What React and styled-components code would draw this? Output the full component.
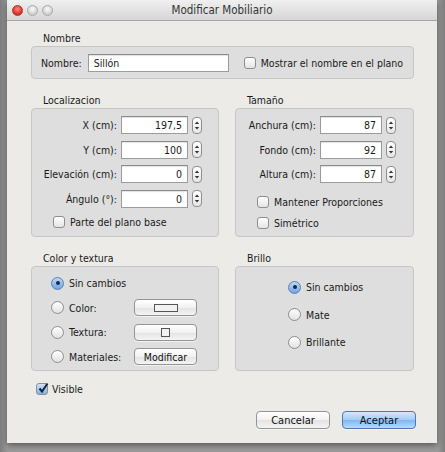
import { createGlobalStyle, styled, css } from "styled-components"

const Global = createGlobalStyle`
    html, body {
        margin: 0;
        padding: 0;
        background: #8f8f8f;
    }
    #root {
        width: 445px;
        height: 452px;
        overflow: hidden;
        background: linear-gradient(90deg, #7d7d7d 0px, #9a9a9a 7px, #9a9a9a 438px, #7d7d7d 445px);
    }
`

const Window = styled.div`
    margin-left: 7px;
    width: 430px;
    height: 443px;
    background: #ecebe8;
    font-family: "DejaVu Sans Condensed", "DejaVu Sans", sans-serif;
    font-stretch: condensed;
    font-size: 10.5px;
    color: #1a1a1a;
    display: flex;
    flex-direction: column;
    box-shadow: 0 2px 6px rgba(0, 0, 0, 0.45);
`

const TitleBar = styled.div`
    height: 20px;
    flex: none;
    display: flex;
    align-items: center;
    position: relative;
    background: linear-gradient(#f0f0f0, #d6d6d6);
    border-bottom: 1px solid #a7a7a7;
    border-radius: 4px 4px 0 0;
`

const Lights = styled.div`
    display: flex;
    gap: 4px;
    padding-left: 5px;
`

const Light = styled.span`
    box-sizing: border-box;
    width: 11px;
    height: 11px;
    border-radius: 50%;
    border: 1px solid ${(p) => (p.$red ? "#a33" : "#a8a8a8")};
    background: ${(p) =>
        p.$red
            ? "radial-gradient(circle at 50% 35%, #ff8a80, #e0362b 60%, #a51d14)"
            : "radial-gradient(circle at 50% 35%, #fafafa, #d6d6d6 60%, #bdbdbd)"};
`

const Title = styled.div`
    position: absolute;
    left: 0;
    right: 0;
    text-align: center;
    font-size: 11.5px;
    color: #333;
    pointer-events: none;
`

const Content = styled.div`
    flex: 1;
    padding: 9px 23px 0 24px;
    display: flex;
    flex-direction: column;
`

const Columns = styled.div`
    display: grid;
    grid-template-columns: 188px 179px;
    column-gap: 16px;
    margin-top: 13px;
`

const Section = styled.div`
    display: flex;
    flex-direction: column;
`

const SectionTitle = styled.div`
    padding-left: 12px;
    height: 16px;
    line-height: 16px;
`

const Panel = styled.div`
    background: #dedede;
    border: 1px solid #c6c6c6;
    border-radius: 4px;
    box-sizing: border-box;
    height: ${(p) => p.$h}px;
`

const NameRow = styled.div`
    display: flex;
    align-items: center;
    height: 100%;
    padding-left: 9px;
`

const Label = styled.span`
    white-space: nowrap;
    text-align: ${(p) => p.$align || "left"};
`

const Input = styled.div`
    box-sizing: border-box;
    width: ${(p) => p.$w}px;
    height: 18px;
    line-height: 16px;
    background: #fff;
    border: 1px solid #9c9c9c;
    border-top-color: #8a8a8a;
    box-shadow: inset 0 1px 1px rgba(0, 0, 0, 0.12);
    padding: 0 5px;
    text-align: ${(p) => p.$align || "left"};
`

const Check = styled.span`
    box-sizing: border-box;
    width: 12px;
    height: 12px;
    flex: none;
    border: 1px solid #8e8e8e;
    border-radius: 3px;
    background: ${(p) =>
        p.$on ? "linear-gradient(#cfe3fa, #7fb1e8)" : "linear-gradient(#ffffff, #e4e4e4)"};
    position: relative;
    display: inline-flex;
    align-items: center;
    justify-content: center;
`

const Radio = styled.span`
    box-sizing: border-box;
    width: 13px;
    height: 13px;
    flex: none;
    border-radius: 50%;
    border: 1px solid ${(p) => (p.$on ? "#5a7fb0" : "#8e8e8e")};
    background: ${(p) =>
        p.$on ? "linear-gradient(#bcd8f8, #6ea6e8)" : "linear-gradient(#ffffff, #e2e2e2)"};
    display: inline-flex;
    align-items: center;
    justify-content: center;
    &::after {
        content: "";
        width: 4px;
        height: 4px;
        border-radius: 50%;
        background: #1a2a3a;
        display: ${(p) => (p.$on ? "block" : "none")};
    }
`

const Option = styled.div`
    display: flex;
    align-items: center;
    gap: 5px;
    height: 13px;
    ${(p) =>
        p.$ml &&
        css`
            margin-left: ${p.$ml}px;
        `}
`

const Form = styled.div`
    display: grid;
    grid-template-columns: 1fr ${(p) => p.$input}px 10px;
    column-gap: ${(p) => p.$gap}px;
    row-gap: 6.5px;
    align-items: center;
    padding: 7px ${(p) => p.$pr}px 0 0;
`

const SpinnerBox = styled.span`
    box-sizing: border-box;
    width: 10px;
    height: 17px;
    border: 1px solid #8e8e8e;
    border-radius: 4px;
    background: linear-gradient(#ffffff, #e6e6e6);
    display: flex;
    align-items: center;
    justify-content: center;
`

const Checks = styled.div`
    display: flex;
    flex-direction: column;
    gap: ${(p) => p.$gap}px;
    padding-left: ${(p) => p.$pl}px;
    margin-top: ${(p) => p.$mt}px;
`

const Radios = styled.div`
    display: grid;
    grid-template-columns: 70px 63px;
    grid-auto-rows: 17px;
    column-gap: 13px;
    row-gap: 7.5px;
    align-items: center;
    padding: 7.5px 0 0 19px;
`

const Centered = styled.div`
    display: flex;
    flex-direction: column;
    gap: 14.5px;
    padding: 13.5px 0 0 52px;
`

const PushButton = styled.button`
    box-sizing: border-box;
    width: ${(p) => p.$w}px;
    height: ${(p) => p.$h || 17}px;
    padding: 0;
    font-family: inherit;
    font-stretch: inherit;
    font-size: ${(p) => p.$fs || 10.5}px;
    color: #111;
    border-radius: 4px;
    border: 1px solid #949494;
    background: linear-gradient(#ffffff, #f1f1f1 50%, #e3e3e3 51%, #f4f4f4);
    box-shadow: 0 1px 0 rgba(255, 255, 255, 0.6);
    display: inline-flex;
    align-items: center;
    justify-content: center;
    ${(p) =>
        p.$primary &&
        css`
            border-color: #4d78b3;
            background: linear-gradient(#d4e8fd, #a2cbf5 50%, #7fb7f0 51%, #b4dcfb);
        `}
`

const Swatch = styled.span`
    box-sizing: border-box;
    width: ${(p) => p.$w}px;
    height: ${(p) => p.$h}px;
    border: 1px solid #555;
    background: #f2f2f2;
`

const Footer = styled.div`
    display: flex;
    flex-direction: column;
`

const VisibleRow = styled.div`
    display: flex;
    align-items: center;
    gap: 4px;
    height: 13px;
    padding: 11.5px 0 0 5px;
`

const Actions = styled.div`
    display: flex;
    justify-content: flex-end;
    gap: 12px;
    margin: 15.5px -2px 0 0;
`

function Spinner() {
    return (
        <SpinnerBox>
            <svg width="6" height="11" viewBox="0 0 6 11">
                <path d="M3 1.5 L5.2 4 H0.8 Z" fill="#333" />
                <path d="M3 9.5 L5.2 7 H0.8 Z" fill="#333" />
            </svg>
        </SpinnerBox>
    )
}

function NumberRow({ label, value, width }) {
    return (
        <>
            <Label $align="right">{label}</Label>
            <Input $w={width} $align="right">
                {value}
            </Input>
            <Spinner />
        </>
    )
}

export default function App() {
    return (
        <>
            <Global />
            <Window>
                <TitleBar>
                    <Lights>
                        <Light $red />
                        <Light />
                        <Light />
                    </Lights>
                    <Title>Modificar Mobiliario</Title>
                </TitleBar>
                <Content>
                    <Section>
                        <SectionTitle>Nombre</SectionTitle>
                        <Panel $h={33}>
                            <NameRow>
                                <Label>Nombre:</Label>
                                <Input $w={141} style={{ marginLeft: 6 }}>
                                    Sillón
                                </Input>
                                <Option $ml={15}>
                                    <Check />
                                    <Label>Mostrar el nombre en el plano</Label>
                                </Option>
                            </NameRow>
                        </Panel>
                    </Section>

                    <Columns>
                        <Section>
                            <SectionTitle>Localizacion</SectionTitle>
                            <Panel $h={129}>
                                <Form $input={67} $gap={4} $pr={16}>
                                    <NumberRow label="X (cm):" value="197,5" />
                                    <NumberRow label="Y (cm):" value="100" />
                                    <NumberRow label="Elevación (cm):" value="0" />
                                    <NumberRow label="Ángulo (°):" value="0" />
                                </Form>
                                <Checks $gap={0} $pl={21} $mt={8}>
                                    <Option>
                                        <Check />
                                        <Label>Parte del plano base</Label>
                                    </Option>
                                </Checks>
                            </Panel>
                        </Section>
                        <Section>
                            <SectionTitle>Tamaño</SectionTitle>
                            <Panel $h={129}>
                                <Form $input={62} $gap={4} $pr={17}>
                                    <NumberRow label="Anchura (cm):" value="87" />
                                    <NumberRow label="Fondo (cm):" value="92" />
                                    <NumberRow label="Altura (cm):" value="87" />
                                </Form>
                                <Checks $gap={8} $pl={21} $mt={12}>
                                    <Option>
                                        <Check />
                                        <Label>Mantener Proporciones</Label>
                                    </Option>
                                    <Option>
                                        <Check />
                                        <Label>Simétrico</Label>
                                    </Option>
                                </Checks>
                            </Panel>
                        </Section>
                    </Columns>

                    <Columns>
                        <Section>
                            <SectionTitle>Color y textura</SectionTitle>
                            <Panel $h={105}>
                                <Radios>
                                    <Option>
                                        <Radio $on />
                                        <Label>Sin cambios</Label>
                                    </Option>
                                    <span />
                                    <Option>
                                        <Radio />
                                        <Label>Color:</Label>
                                    </Option>
                                    <PushButton $w={63}>
                                        <Swatch $w={24} $h={8} />
                                    </PushButton>
                                    <Option>
                                        <Radio />
                                        <Label>Textura:</Label>
                                    </Option>
                                    <PushButton $w={63}>
                                        <Swatch $w={9} $h={9} />
                                    </PushButton>
                                    <Option>
                                        <Radio />
                                        <Label>Materiales:</Label>
                                    </Option>
                                    <PushButton $w={63}>Modificar</PushButton>
                                </Radios>
                            </Panel>
                        </Section>
                        <Section>
                            <SectionTitle>Brillo</SectionTitle>
                            <Panel $h={105}>
                                <Centered>
                                    <Option>
                                        <Radio $on />
                                        <Label>Sin cambios</Label>
                                    </Option>
                                    <Option>
                                        <Radio />
                                        <Label>Mate</Label>
                                    </Option>
                                    <Option>
                                        <Radio />
                                        <Label>Brillante</Label>
                                    </Option>
                                </Centered>
                            </Panel>
                        </Section>
                    </Columns>

                    <Footer>
                        <VisibleRow>
                            <Check $on>
                                <svg
                                    width="12"
                                    height="12"
                                    viewBox="0 0 12 12"
                                    style={{ position: "absolute", left: 0, top: -2 }}>
                                    <path d="M2.5 6.5 L5 9.5 L10.5 1.5" stroke="#1b2433" strokeWidth="2" fill="none" />
                                </svg>
                            </Check>
                            <Label>Visible</Label>
                        </VisibleRow>
                        <Actions>
                            <PushButton $w={74} $h={18} $fs={11}>
                                Cancelar
                            </PushButton>
                            <PushButton $w={74} $h={18} $fs={11} $primary>
                                Aceptar
                            </PushButton>
                        </Actions>
                    </Footer>
                </Content>
            </Window>
        </>
    )
}
